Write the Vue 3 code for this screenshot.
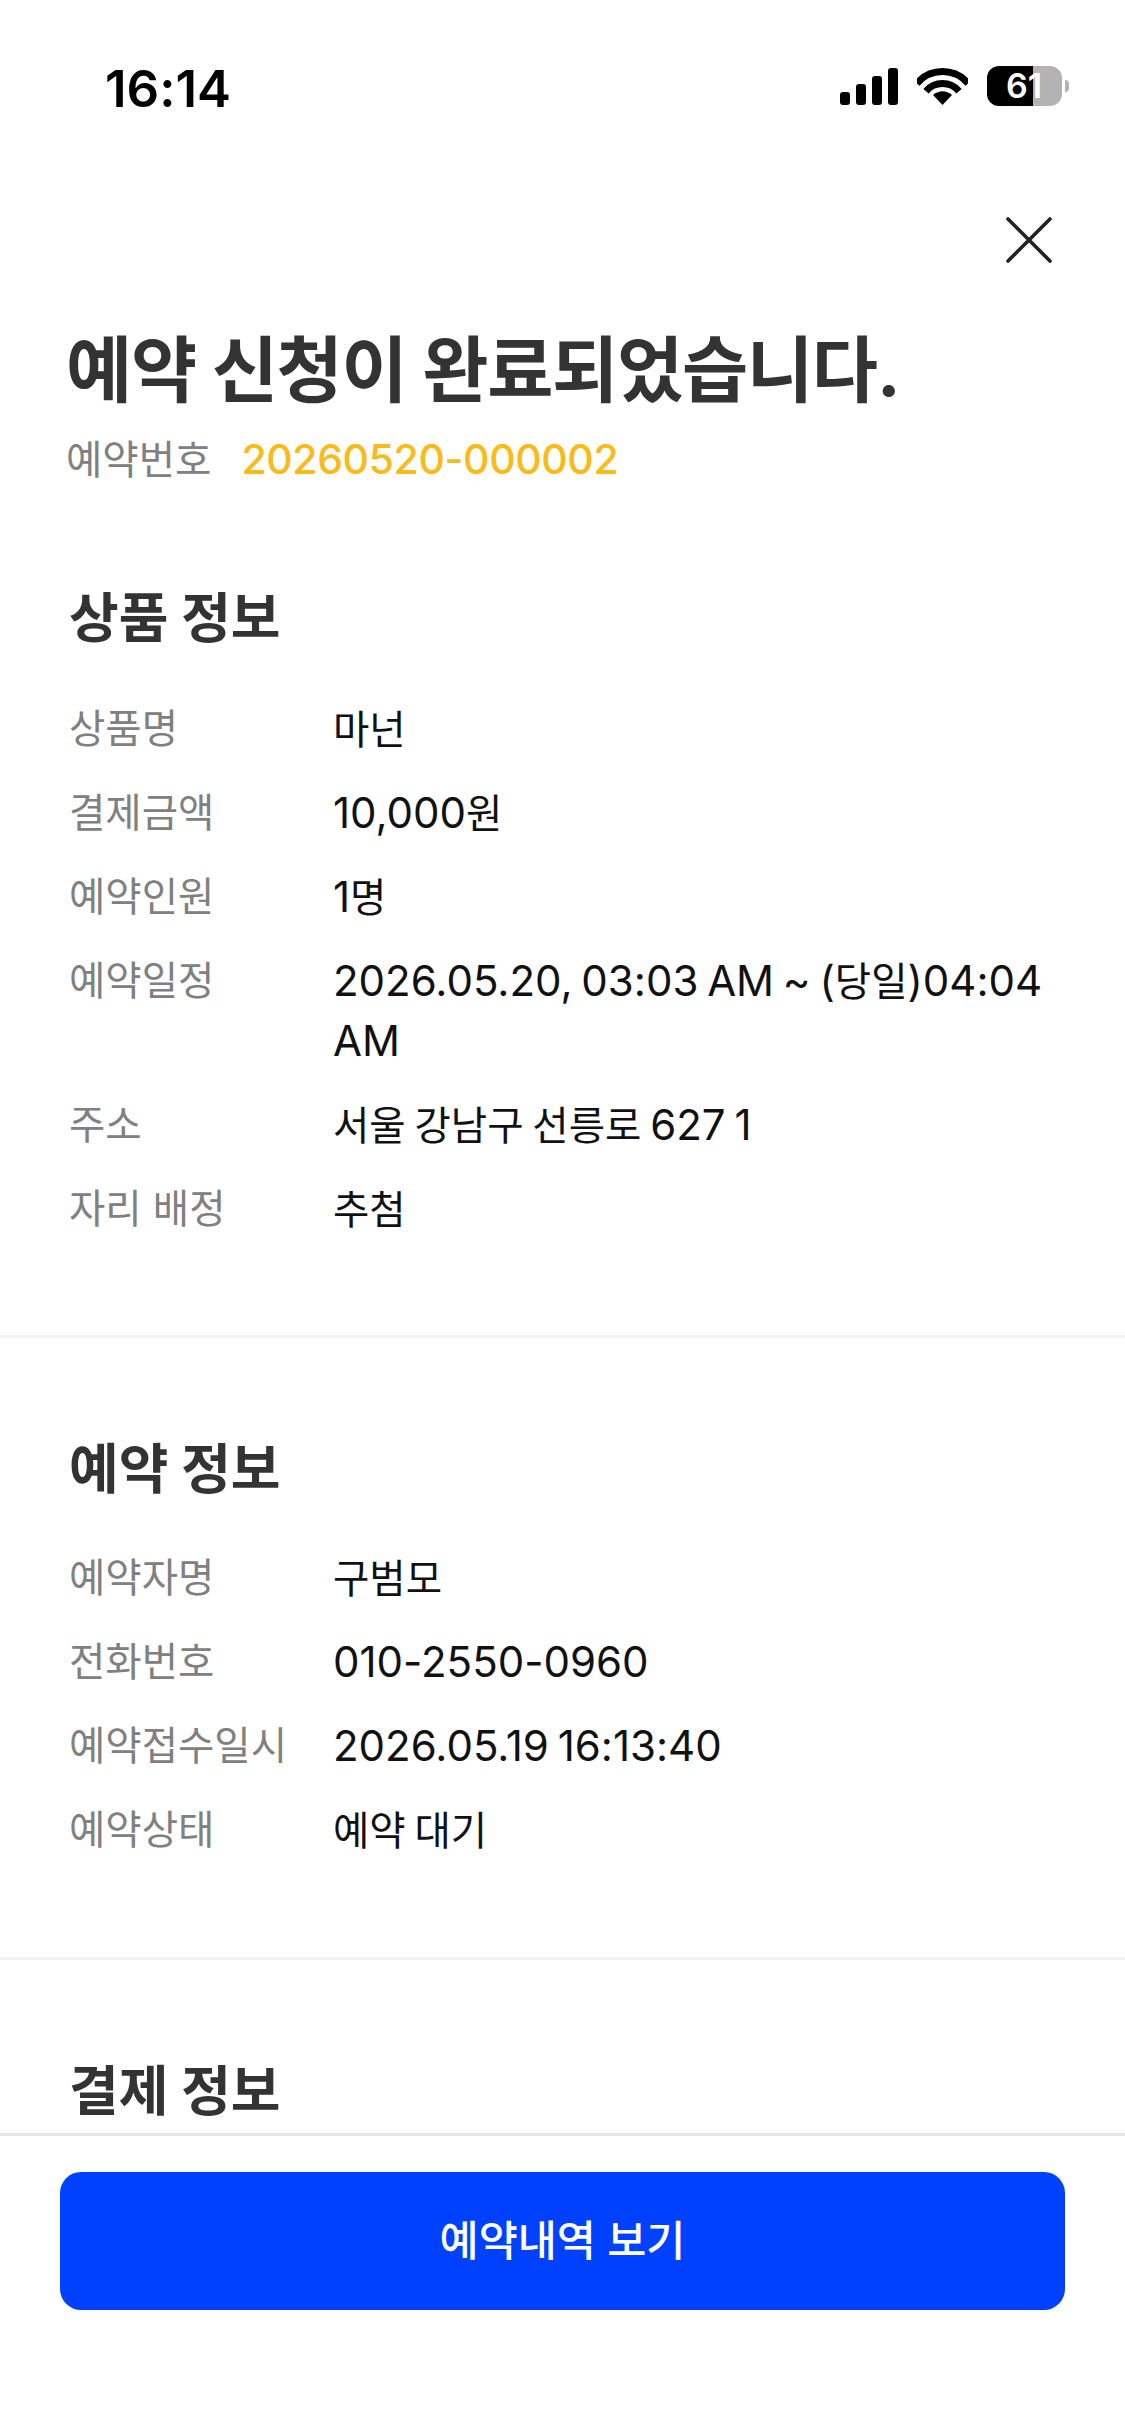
<script setup>
const product = [
  { label: '상품명', value: '마넌' },
  { label: '결제금액', value: '10,000원' },
  { label: '예약인원', value: '1명' },
  { label: '예약일정', value: '2026.05.20, 03:03 AM ~ (당일)04:04 AM' },
  { label: '주소', value: '서울 강남구 선릉로 627 1' },
  { label: '자리 배정', value: '추첨' },
]
const booking = [
  { label: '예약자명', value: '구범모' },
  { label: '전화번호', value: '010-2550-0960' },
  { label: '예약접수일시', value: '2026.05.19 16:13:40' },
  { label: '예약상태', value: '예약 대기' },
]
// Hangul runs are set slightly smaller than Latin/digit runs, as in the reference font.
function runs(text) {
  return (text.match(/[\uac00-\ud7a3]+|[^\uac00-\ud7a3]+/g) || []).map((t) => ({
    t,
    ko: /[\uac00-\ud7a3]/.test(t),
  }))
}
function arc(r) {
  const a = 50 * Math.PI / 180
  const cx = 25.5, cy = 37
  const dx = (r * Math.sin(a)).toFixed(2), dy = (r * Math.cos(a)).toFixed(2)
  return `M${cx - dx} ${cy - dy}A${r} ${r} 0 0 1 ${cx + +dx} ${cy - dy}`
}
const wifiOuter = arc(33.5)
const wifiMiddle = arc(21.5)
</script>

<template>
  <div class="page">
    <div class="status">
      <span class="time">16:14</span>
      <div class="status-icons">
        <div class="signal">
          <i class="b1"></i><i class="b2"></i><i class="b3"></i><i class="b4"></i>
        </div>
        <svg class="wifi" width="51" height="37" viewBox="0 0 51 37">
          <path :d="wifiOuter" fill="none" stroke="#000" stroke-width="7" />
          <path :d="wifiMiddle" fill="none" stroke="#000" stroke-width="7" />
          <path d="M25.5 37 L16 27 Q25.5 19.5 35 27 Z" fill="#000" />
        </svg>
        <div class="battery">
          <div class="battery-body"><span class="battery-text">61</span></div>
          <div class="battery-nub"></div>
        </div>
      </div>
    </div>

    <div class="close-row">
      <svg width="48" height="48" viewBox="0 0 48 48">
        <path d="M3 3 L45 45 M45 3 L3 45" stroke="#222" stroke-width="3.6" stroke-linecap="round" fill="none" />
      </svg>
    </div>

    <main class="content">
      <header class="head">
        <h1 class="title">예약 신청이 완료되었습니다.</h1>
        <p class="order"><span class="order-label">예약번호</span><span class="order-no">20260520-000002</span></p>
      </header>

      <section class="section first">
        <h2 class="section-title">상품 정보</h2>
        <dl class="rows">
          <div v-for="r in product" :key="r.label" class="row">
            <dt class="label">{{ r.label }}</dt>
            <dd class="value"><span v-for="(s, i) in runs(r.value)" :key="i" :class="{ ko: s.ko }">{{ s.t }}</span></dd>
          </div>
        </dl>
      </section>

      <section class="section second">
        <h2 class="section-title">예약 정보</h2>
        <dl class="rows">
          <div v-for="r in booking" :key="r.label" class="row">
            <dt class="label">{{ r.label }}</dt>
            <dd class="value"><span v-for="(s, i) in runs(r.value)" :key="i" :class="{ ko: s.ko }">{{ s.t }}</span></dd>
          </div>
        </dl>
      </section>

      <section class="section">
        <h2 class="section-title">결제 정보</h2>
      </section>
    </main>

    <footer class="footer">
      <button class="cta">예약내역 보기</button>
    </footer>
  </div>
</template>

<style>
html, body { margin: 0; padding: 0; background: #fff; }
</style>

<style scoped>
.page {
  width: 1125px;
  height: 2436px;
  display: flex;
  flex-direction: column;
  overflow: hidden;
  background: #fff;
  font-family: Inter, "Noto Sans CJK KR", sans-serif;
  font-feature-settings: "calt" 0;
}
.status {
  flex: none;
  height: 178px;
  box-sizing: border-box;
  padding: 60px 56px 0 105px;
  display: flex;
  justify-content: space-between;
  align-items: flex-start;
}
.time {
  font-size: 51px;
  font-weight: 600;
  line-height: 58px;
  color: #000;
}
.status-icons {
  display: flex;
  align-items: flex-start;
  padding-top: 8px;
}
.signal {
  display: flex;
  align-items: flex-end;
  gap: 6px;
  height: 37px;
  margin-right: 19px;
}
.signal i { width: 10px; background: #000; border-radius: 3px; display: block; }
.b1 { height: 13px; }
.b2 { height: 21px; }
.b3 { height: 29px; }
.b4 { height: 37px; }
.wifi { margin-right: 19px; }
.battery {
  display: flex;
  align-items: center;
  margin-top: -2px;
}
.battery-body {
  width: 75px;
  height: 40px;
  border-radius: 12px;
  background: linear-gradient(to right, #000 46px, #b3b3b3 46px);
  display: flex;
  align-items: center;
  justify-content: center;
}
.battery-text {
  color: #fff;
  font-size: 34px;
  font-weight: 600;
  line-height: 40px;
  margin-right: 1px;
}
.battery-nub {
  width: 4px;
  height: 12px;
  margin-left: 3px;
  background: #b3b3b3;
  border-radius: 0 6px 6px 0;
}
.close-row {
  flex: none;
  display: flex;
  justify-content: flex-end;
  padding-right: 72px;
  height: 48px;
  margin-top: 38px;
}
.content {
  flex: 1;
  min-height: 0;
  overflow: hidden;
}
.head {
  padding: 64px 66px 0;
}
.title {
  margin: 0;
  font-size: 72px;
  font-weight: 700;
  line-height: 84px;
  color: #333;
  letter-spacing: -1.3px;
}
.order {
  margin: 17px 0 0;
  font-size: 41px;
  line-height: 60px;
  display: flex;
  align-items: baseline;
  gap: 30px;
}
.order-label { color: #808080; font-size: 39.5px; }
.order-no { color: #f9bb1a; font-weight: 500; letter-spacing: -0.4px; }
.section {
  padding: 96px 69px 97px;
  border-bottom: 3px solid #f3f3f3;
}
.section.first { padding-top: 93px; padding-bottom: 96px; }
.section:last-child { border-bottom: 0; }
.section-title {
  margin: 0;
  font-size: 54px;
  line-height: 72px;
  font-weight: 700;
  color: #333;
}
.rows {
  margin: 44px 0 0;
  display: flex;
  flex-direction: column;
  gap: 24px;
}
.second .rows { margin-top: 42px; }
.row {
  display: flex;
  font-size: 42px;
  line-height: 60px;
}
.label {
  flex: none;
  width: 264px;
  color: #808080;
  font-size: 39.5px;
}
.value {
  margin: 0;
  flex: 1;
  color: #111;
  word-spacing: -3px;
}
.value span { line-height: 1; }
.ko { font-size: 39.5px; }
.footer {
  flex: none;
  height: 303px;
  box-sizing: border-box;
  border-top: 3px solid #e5e5e5;
  padding: 36px 60px 0 60px;
  background: #fff;
}
.cta {
  display: block;
  width: 100%;
  height: 138px;
  padding: 0 0 8px;
  border: 0;
  border-radius: 21px;
  background: #0040ff;
  color: #fff;
  font-family: inherit;
  font-size: 42.5px;
  font-weight: 500;
}
</style>
